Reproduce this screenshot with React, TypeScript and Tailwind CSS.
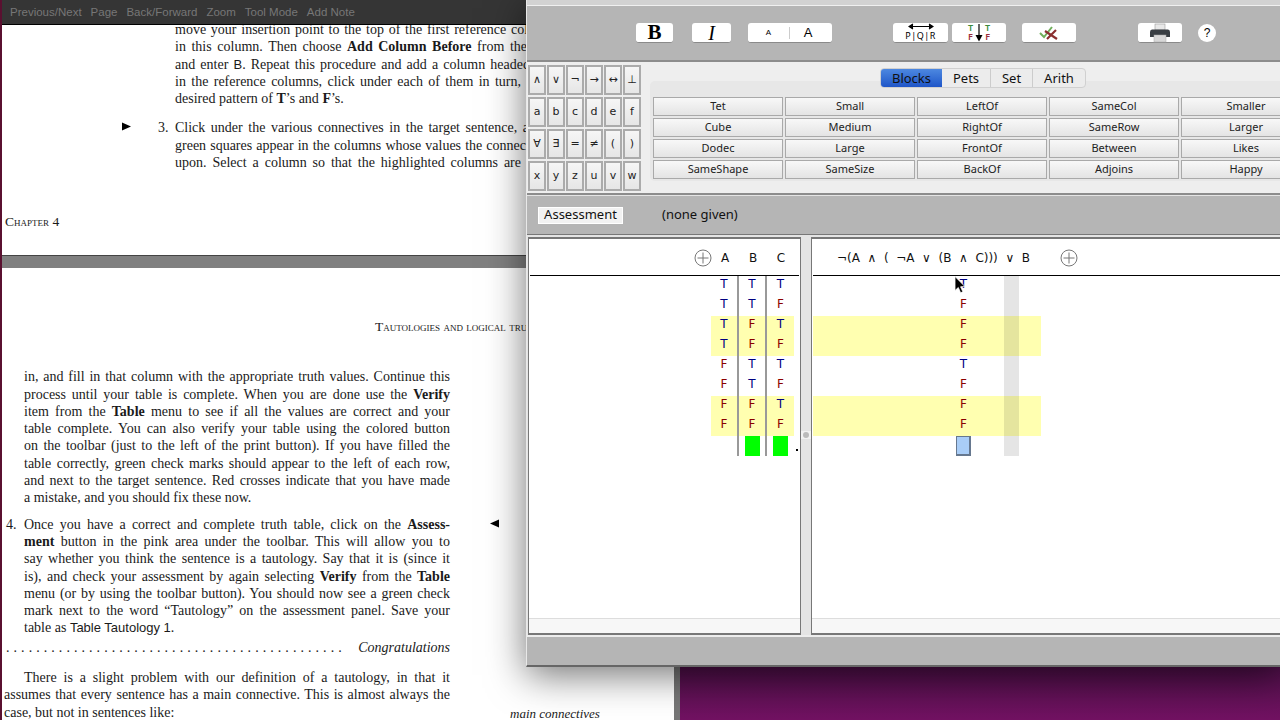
import React from "react";

const serif = "font-['Liberation_Serif',serif]";
const ui = "font-['Noto_Sans','DejaVu_Sans',sans-serif]";

// one typeset line of the book page, stretched to its measure like TeX does
const Jl = ({ children, w = "w-[426px]" }: { children: React.ReactNode; w?: string }) => (
  <div className={`${w} h-[17.3px] whitespace-nowrap [text-align:justify] [text-align-last:justify]`}>{children}</div>
);

const Pl = ({ children }: { children: React.ReactNode }) => (
  <div className="h-[17.3px] whitespace-nowrap">{children}</div>
);

const PdfWindow = () => (
  <div className={`absolute left-0 top-0 w-[680px] h-[720px] flex flex-col border-l-2 border-l-[#5a1030] border-r-[6px] border-r-[#777] overflow-hidden bg-white text-[14px] leading-[17.3px] text-[#1a1a1a] ${serif}`}>
    <div className="h-[25px] shrink-0 bg-[#353535] border-b border-black flex items-center gap-[9px] pl-[8px] pt-[2px] text-[11.5px] text-[#777] font-['Liberation_Sans',sans-serif]">
      <span>Previous/Next</span>
      <span>Page</span>
      <span>Back/Forward</span>
      <span>Zoom</span>
      <span>Tool Mode</span>
      <span>Add Note</span>
    </div>

    {/* first page */}
    <div className="h-[230px] shrink-0 overflow-hidden">
      <div className="ml-[173px] -mt-[4px]">
        <Jl w="w-[378px]">move your insertion point to the top of the first reference column</Jl>
        <Jl w="w-[352px]">in this column. Then choose <b>Add Column Before</b> from the</Jl>
        <Jl w="w-[355px]">and enter <span className="font-['Liberation_Sans',sans-serif] text-[13px]">B</span>. Repeat this procedure and add a column headed</Jl>
        <Jl w="w-[346px]">in the reference columns, click under each of them in turn,</Jl>
        <Pl>desired pattern of <b>T</b>’s and <b>F</b>’s.</Pl>
      </div>
      <div className="relative ml-[173px] mt-[12px]">
        <svg className="absolute -left-[53px] top-[3px]" width="9" height="9" viewBox="0 0 9 9">
          <path d="M0 0.5 L9 4.5 L0 8.5 Z" fill="#000" />
        </svg>
        <span className="absolute -left-[17px] top-0">3.</span>
        <Jl w="w-[368px]">Click under the various connectives in the target sentence, and</Jl>
        <Jl w="w-[372px]">green squares appear in the columns whose values the connective</Jl>
        <Jl w="w-[346px]">upon. Select a column so that the highlighted columns are</Jl>
      </div>
      <div className="ml-[3px] mt-[42px] [font-variant-caps:small-caps] text-[13.5px]">Chapter 4</div>
    </div>

    <div className="h-[13px] shrink-0 bg-[#808080] border-t border-[#444]" />

    {/* second page */}
    <div className="flex-1 relative">
      <div className="ml-[373px] mt-[50px] whitespace-nowrap [font-variant-caps:small-caps] text-[13.5px]">Tautologies and logical truths</div>
      <div className="ml-[22px] mt-[33px]">
        <Jl>in, and fill in that column with the appropriate truth values. Continue this</Jl>
        <Jl>process until your table is complete. When you are done use the <b>Verify</b></Jl>
        <Jl>item from the <b>Table</b> menu to see if all the values are correct and your</Jl>
        <Jl>table complete. You can also verify your table using the colored button</Jl>
        <Jl>on the toolbar (just to the left of the print button). If you have filled the</Jl>
        <Jl>table correctly, green check marks should appear to the left of each row,</Jl>
        <Jl>and next to the target sentence. Red crosses indicate that you have made</Jl>
        <Pl>a mistake, and you should fix these now.</Pl>
      </div>
      <div className="relative ml-[22px] mt-[9px]">
        <span className="absolute -left-[18px] top-0">4.</span>
        <svg className="absolute left-[466px] top-[3px]" width="9" height="9" viewBox="0 0 9 9">
          <path d="M9 0.5 L0 4.5 L9 8.5 Z" fill="#000" />
        </svg>
        <Jl>Once you have a correct and complete truth table, click on the <b>Assess-</b></Jl>
        <Jl><b>ment</b> button in the pink area under the toolbar. This will allow you to</Jl>
        <Jl>say whether you think the sentence is a tautology. Say that it is (since it</Jl>
        <Jl>is), and check your assessment by again selecting <b>Verify</b> from the <b>Table</b></Jl>
        <Jl>menu (or by using the toolbar button). You should now see a green check</Jl>
        <Jl>mark next to the word “Tautology” on the assessment panel. Save your</Jl>
        <Pl>table as <span className="font-['Liberation_Sans',sans-serif] text-[13px]">Table Tautology 1</span>.</Pl>
      </div>
      <div className="ml-[4px] w-[444px] mt-[2px] flex justify-between whitespace-nowrap">
        <span className="tracking-[4.05px]">{".".repeat(45)}</span>
        <i>Congratulations</i>
      </div>
      <div className="relative ml-[2px] mt-[13px]">
        <div className="pl-[20px]"><Jl>There is a slight problem with our definition of a tautology, in that it</Jl></div>
        <Jl w="w-[446px]">assumes that every sentence has a main connective. This is almost always the</Jl>
        <Pl>case, but not in sentences like:</Pl>
        <i className="absolute left-[506px] top-[36px] text-[13px] whitespace-nowrap">main connectives</i>
      </div>
    </div>
  </div>
);

const TbBtn = ({ className, children }: { className: string; children?: React.ReactNode }) => (
  <div className={`h-[20px] bg-white rounded-[3px] border-b border-[#8a8a8a] flex items-center justify-center shrink-0 ${className}`}>{children}</div>
);

const Toolbar = () => (
  <div className="h-[54px] shrink-0 bg-[#b5b5b5] flex items-center text-black">
    <TbBtn className="ml-[109px] w-[37px] font-['Liberation_Serif',serif] font-bold text-[21px]">B</TbBtn>
    <TbBtn className="ml-[19px] w-[39px] font-['Liberation_Serif',serif] italic text-[20px]">I</TbBtn>
    <TbBtn className="ml-[17px] w-[84px]">
      <span className="w-[42px] border-r border-[#ccc] text-center text-[8px] font-['Liberation_Sans',sans-serif]">A</span>
      <span className="w-[42px] pr-[6px] text-center text-[13px] font-medium font-['Liberation_Sans',sans-serif]">A</span>
    </TbBtn>
    <TbBtn className="ml-[61px] w-[55px] flex-col !justify-start">
      <svg width="26" height="7" viewBox="0 0 26 7">
        <path d="M2 3.5 H24 M5 1 L1 3.5 L5 6 M21 1 L25 3.5 L21 6" stroke="#000" strokeWidth="1.2" fill="#000" />
      </svg>
      <span className={`text-[9px] leading-[11px] tracking-[0.5px] ${ui}`}>P|Q|R</span>
    </TbBtn>
    <TbBtn className="ml-[4px] w-[54px]">
      <div className={`relative w-[28px] h-[19px] text-[9px] leading-[9px] font-semibold ${ui}`}>
        <span className="absolute left-[3px] top-0 text-[#3c8a3c]">T</span>
        <span className="absolute right-[3px] top-0 text-[#3c8a3c]">T</span>
        <span className="absolute left-[3px] top-[9px] text-[#9a2a3a]">F</span>
        <span className="absolute right-[3px] top-[9px] text-[#9a2a3a]">F</span>
        <svg className="absolute left-[10px] top-[1px]" width="8" height="18" viewBox="0 0 8 18">
          <path d="M4 0 V14" stroke="#000" strokeWidth="1.2" />
          <path d="M0.5 11 L4 17.5 L7.5 11 Z" fill="#000" />
        </svg>
      </div>
    </TbBtn>
    <TbBtn className="ml-[16px] w-[54px]">
      <svg width="20" height="15" viewBox="0 0 20 15">
        <path d="M1 8 L5 12 L13 2" stroke="#6fae5a" strokeWidth="2" fill="none" />
        <path d="M6 6 L18 14 M17 5 L8 14" stroke="#8a2f2f" strokeWidth="2.2" fill="none" />
      </svg>
    </TbBtn>
    <TbBtn className="ml-[62px] w-[44px]">
      <svg width="22" height="20" viewBox="0 0 22 20">
        <rect x="6" y="1" width="10" height="6" fill="#e8e8e8" stroke="#999" strokeWidth="0.6" />
        <path d="M3 6.5 H19 Q21 6.5 21 9 V14 H1 V9 Q1 6.5 3 6.5 Z" fill="#3a3f44" />
        <rect x="5" y="12" width="12" height="7" fill="#d8d8d8" stroke="#aaa" strokeWidth="0.5" />
      </svg>
    </TbBtn>
    <div className="ml-[16px] w-[18px] h-[18px] rounded-full bg-white flex items-center justify-center text-[12px] shrink-0 font-['Liberation_Sans',sans-serif]">?</div>
  </div>
);

const keys = ["∧", "∨", "¬", "→", "↔", "⊥", "a", "b", "c", "d", "e", "f", "∀", "∃", "=", "≠", "(", ")", "x", "y", "z", "u", "v", "w"];

const preds = [
  "Tet", "Small", "LeftOf", "SameCol", "Smaller",
  "Cube", "Medium", "RightOf", "SameRow", "Larger",
  "Dodec", "Large", "FrontOf", "Between", "Likes",
  "SameShape", "SameSize", "BackOf", "Adjoins", "Happy",
];

const Palette = () => (
  <div className={`h-[131px] shrink-0 bg-[#eeeeee] flex text-[11px] text-[#222] ${ui}`}>
    <div className="ml-px mt-[3px] grid grid-cols-[repeat(6,18px)] auto-rows-[30px] gap-x-px gap-y-[2px] shrink-0">
      {keys.map((k) => (
        <div key={k} className="border-2 border-[#ababab] bg-gradient-to-b from-[#f6f6f6] to-[#e6e6e6] flex items-center justify-center font-['DejaVu_Sans',sans-serif] text-[11px]">{k}</div>
      ))}
    </div>
    <div className="ml-[9px] flex flex-col shrink-0">
      <div className="ml-[230px] mt-[6px] -mb-[7px] h-[20px] w-[206px] relative flex rounded-[4px] border border-[#d0d0d0] bg-[#ececec] text-[13px] leading-[18px] text-center text-[#111] overflow-hidden">
        <div className="w-[61px] bg-gradient-to-b from-[#4d88e0] to-[#1f55c8]">Blocks</div>
        <div className="w-[49px] border-r border-[#ccc]">Pets</div>
        <div className="w-[42px] border-r border-[#ccc]">Set</div>
        <div className="flex-1">Arith</div>
      </div>
      <div className="w-[660px] h-[100px] bg-[#e7e7e7] rounded-[5px] pt-[16px] pl-[3px] grid grid-cols-[repeat(5,130px)] auto-rows-[19px] gap-x-[2px] gap-y-[2px]">
        {preds.map((p) => (
          <div key={p} className="border border-[#a9a9a9] bg-gradient-to-b from-[#f8f8f8] to-[#e4e4e4] flex items-center justify-center">{p}</div>
        ))}
      </div>
    </div>
  </div>
);

const PlusCircle = () => (
  <svg width="18" height="18" viewBox="0 0 18 18" className="shrink-0">
    <circle cx="9" cy="9" r="8" fill="none" stroke="#777" strokeWidth="1" />
    <path d="M9 3.5 V14.5 M3.5 9 H14.5" stroke="#777" strokeWidth="1" />
  </svg>
);

const Tv = ({ v }: { v: string }) => (
  <span className={v === "T" ? "text-[#000080]" : "text-[#8b0000]"}>{v}</span>
);

const refRows = ["TTT", "TTF", "TFT", "TFF", "FTT", "FTF", "FFT", "FFF"];
const targetCol = ["T", "F", "F", "F", "T", "F", "F", "F"];
const isHi = (i: number) => i === 2 || i === 3 || i === 6 || i === 7;

const TablePanels = () => (
  <div className="h-[398px] shrink-0 flex items-stretch pl-px bg-[#e4e4e4] text-[12px] text-[#111] font-['DejaVu_Sans',sans-serif]">
    {/* reference columns */}
    <div className="w-[273px] shrink-0 flex flex-col bg-white border-2 border-[#777] border-r border-l">
      <div className="h-[37px] shrink-0 mx-px pt-[2px] border-b border-black flex items-center">
        <div className="ml-[164px]"><PlusCircle /></div>
        <span className="w-[28px] -ml-px text-center">A</span>
        <span className="w-[28px] text-center">B</span>
        <span className="w-[28px] text-center">C</span>
      </div>
      <div className="flex-1 flex flex-col pl-[182px] leading-[16px]">
        {refRows.map((r, i) => (
          <div key={i} className={`h-[20px] w-[83px] flex ${isHi(i) ? "bg-[#ffffb0]" : ""}`}>
            <div className="w-[28px] text-center border-r-2 border-[#999]"><Tv v={r[0]} /></div>
            <div className="w-[28px] text-center border-r-2 border-[#999]"><Tv v={r[1]} /></div>
            <div className="w-[27px] text-center"><Tv v={r[2]} /></div>
          </div>
        ))}
        <div className="h-[20px] flex">
          <div className="w-[28px] border-r-2 border-[#999]" />
          <div className="w-[28px] border-r-2 border-[#999] pl-[6px]"><div className="w-[15px] h-full bg-[#00ff00]" /></div>
          <div className="w-[28px] pl-[6px]"><div className="w-[15px] h-full bg-[#00ff00]" /></div>
          <div className="ml-[1px] pt-[13px]"><div className="w-[2px] h-[2px] bg-black" /></div>
        </div>
        <div className="mt-auto -ml-[182px] h-[15px] border-t border-[#ddd] bg-[#f7f7f7]" />
      </div>
    </div>

    {/* divider handle */}
    <div className="w-[10px] shrink-0 pt-[194px] flex flex-col items-center">
      <div className="w-full h-[8px] bg-[#f2f2f2] flex items-center justify-center">
        <div className="w-[6px] h-[6px] rounded-full bg-[#bbb]" />
      </div>
    </div>

    {/* target sentence */}
    <div className="flex-1 flex flex-col bg-white border-2 border-[#777] border-l border-r-0">
      <div className="h-[37px] shrink-0 ml-px pt-[2px] border-b border-black flex items-center pl-[24px] gap-[7.6px] whitespace-nowrap">
        <span>¬(A</span>
        <span>∧</span>
        <span>(</span>
        <span>¬A</span>
        <span>∨</span>
        <span>(B</span>
        <span>∧</span>
        <span>C)))</span>
        <span>∨</span>
        <span>B</span>
        <div className="ml-[22px]"><PlusCircle /></div>
      </div>
      <div className="flex-1 flex flex-col leading-[16px]">
        <div className="relative ml-px w-[228px]">
          {targetCol.map((v, i) => (
            <div key={i} className={`h-[20px] pl-[143px] ${isHi(i) ? "bg-[#ffffb0]" : ""}`}>
              <div className="w-[15px] text-center"><Tv v={v} /></div>
            </div>
          ))}
          <div className="h-[20px] pl-[143px]">
            <div className="w-[15px] h-full bg-[#a9cdf7] border border-[#66788f] border-b-2 border-r-2" />
          </div>
          <div className="absolute left-[191px] top-0 bottom-0 w-[15px] bg-black/10" />
          <svg className="absolute left-[141px] top-0" width="12" height="18" viewBox="0 0 12 18">
            <path d="M1 0.5 V14.5 L4.3 11.5 L6.6 16.8 L8.9 15.8 L6.6 10.8 L11 10.6 Z" fill="#000" stroke="#fff" strokeWidth="0.8" />
          </svg>
        </div>
        <div className="mt-auto h-[15px] border-t border-[#ddd] bg-[#f7f7f7]" />
      </div>
    </div>
  </div>
);

const AppWindow = () => (
  <div className="absolute left-[526px] top-0 w-[754px] h-[667px] flex flex-col bg-[#b5b5b5] border-l border-l-[#e8e8e8] border-b-2 border-b-[#666] shadow-[0_8px_36px_rgba(0,0,0,0.55)]">
    <div className="h-[6px] shrink-0 bg-[#d2d2d2] border-b border-[#f0f0f0]" />
    <Toolbar />
    <div className="h-[2px] shrink-0 bg-[#8c8c8c]" />
    <Palette />
    <div className="h-[3px] shrink-0 bg-[#8c8c8c] border-b border-[#e4e4e4]" />
    <div className={`h-[38px] shrink-0 bg-[#b5b5b5] flex items-center pl-[11px] text-[13px] text-[#111] ${ui}`}>
      <div className="w-[85px] h-[17px] bg-[#f2f2f2] border border-white flex items-center justify-center">Assessment</div>
      <span className="ml-[39px]">(none given)</span>
    </div>
    <div className="h-[3px] shrink-0 bg-[#e4e4e4] border-t border-[#777]" />
    <TablePanels />
    <div className="h-[2px] shrink-0 bg-[#ededed]" />
    <div className="flex-1 bg-[#b5b5b5]" />
  </div>
);

export default function App() {
  return (
    <div className="relative w-[1280px] h-[720px] overflow-hidden bg-[linear-gradient(#4a0f45_92%,#721262_100%)]">
      <PdfWindow />
      <AppWindow />
    </div>
  );
}
